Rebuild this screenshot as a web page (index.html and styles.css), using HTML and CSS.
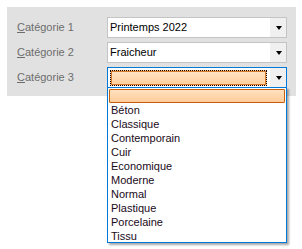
FILE: index.html
```html
<!DOCTYPE html>
<html>
<head>
<meta charset="utf-8">
<link rel="stylesheet" href="styles.css">
</head>
<body>
<div class="panel">
  <div class="row">
    <span class="label"><u>C</u>atégorie 1</span>
    <div class="combo">
      <span class="value">Printemps 2022</span>
      <span class="btn"><span class="tri"></span></span>
    </div>
  </div>
  <div class="row">
    <span class="label"><u>C</u>atégorie 2</span>
    <div class="combo">
      <span class="value">Fraicheur</span>
      <span class="btn"><span class="tri"></span></span>
    </div>
  </div>
  <div class="row">
    <span class="label"><u>C</u>atégorie 3</span>
    <div class="combo focus">
      <span class="value"><span class="sel-edit"></span></span>
      <span class="btn"><span class="tri"></span></span>
    </div>
  </div>
</div>
<ul class="list">
  <li class="selected"></li>
  <li>Béton</li>
  <li>Classique</li>
  <li>Contemporain</li>
  <li>Cuir</li>
  <li>Economique</li>
  <li>Moderne</li>
  <li>Normal</li>
  <li>Plastique</li>
  <li>Porcelaine</li>
  <li>Tissu</li>
</ul>
</body>
</html>
```
FILE: styles.css
```css
html, body {
  margin: 0;
  padding: 0;
  background: #ffffff;
  font-family: "Liberation Sans", Arial, sans-serif;
  font-size: 11px;
}
.panel {
  margin: 7px 0 0 7px;
  width: 289px;
  height: 89px;
  background: #e1e1e1;
  box-sizing: border-box;
  padding: 10px 0 0 10px;
  display: flex;
  flex-direction: column;
  gap: 4px;
}
.row {
  display: flex;
  align-items: center;
  height: 21px;
}
.label {
  width: 90px;
  color: #6d6d6d;
  line-height: 13px;
}
.label u {
  text-decoration-thickness: 1px;
  text-underline-offset: 1px;
}
.combo {
  width: 180px;
  height: 21px;
  box-sizing: border-box;
  border: 1px solid #c4c4c4;
  background: #ffffff;
  display: flex;
  align-items: stretch;
}
.combo.focus {
  border-color: #0078d7;
}
.value {
  flex: 1;
  display: flex;
  align-items: center;
  padding-left: 2px;
  color: #000000;
  line-height: 13px;
}
.focus .value {
  padding: 2px 1px 1px 2px;
  align-items: stretch;
}
.sel-edit {
  flex: 1;
  box-sizing: border-box;
  border: 1px dotted #000000;
  outline: 1px solid #d97a2a;
  outline-offset: -2px;
  background: linear-gradient(#ffe3c6, #ffcf9c);
  margin-right: 2px;
}
.btn {
  width: 16px;
  background: #f0f0f0;
  display: flex;
  align-items: center;
  justify-content: center;
}
.tri {
  width: 0;
  height: 0;
  border-left: 3.5px solid transparent;
  border-right: 3.5px solid transparent;
  border-top: 4px solid #000000;
  margin-left: 1px;
}
.list {
  position: absolute;
  left: 107px;
  top: 87px;
  width: 180px;
  margin: 0;
  padding: 1px 1px 0 1px;
  box-sizing: border-box;
  height: 156px;
  list-style: none;
  border: 1px solid #0078d7;
  background: #ffffff;
  box-shadow: 2px 2px 2px rgba(0, 0, 0, 0.35);
}
.list li {
  height: 14px;
  line-height: 14px;
  padding-left: 2px;
  color: #1a0a20;
  box-sizing: border-box;
}
.list li.selected {
  height: 14px;
  border: 1px solid #c06010;
  background: linear-gradient(#ffe0c0, #ffcc99);
  border-radius: 1px;
}
```
